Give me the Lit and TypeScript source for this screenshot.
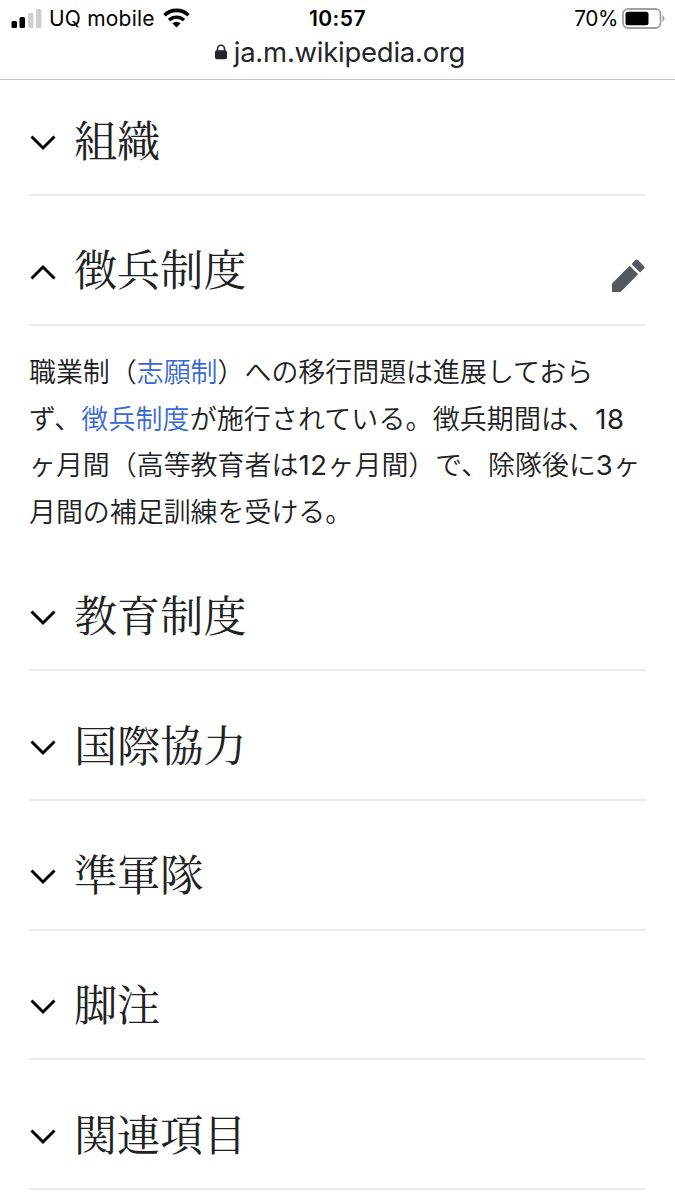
import { LitElement, html, css, svg, nothing } from "lit";
import { customElement, property } from "lit/decorators.js";

@customElement("status-bar")
class StatusBar extends LitElement {
  static styles = css`
    :host { display: block; font-family: Inter, sans-serif; color: #000; }
    .row { display: grid; grid-template-columns: 1fr auto 1fr; height: 36px; align-items: center; padding: 1px 11px 0 11px; box-sizing: border-box; }
    .left, .right { display: flex; align-items: center; }
    .right { justify-content: flex-end; }
    .signal { width: 31px; height: 19px; margin: -1px 7px 0 0; }
    .carrier { font-size: 21px; letter-spacing: 0.2px; }
    .wifi { width: 27px; height: 20px; margin: -1px 0 0 8px; }
    .time { font-size: 21px; font-weight: 600; letter-spacing: 0.5px; }
    .percent { font-size: 20.8px; letter-spacing: -0.4px; }
    .battery { width: 43px; height: 21px; margin: -1px -1px 0 4px; }
    .address { display: flex; justify-content: center; align-items: center; height: 44px; padding: 0 0 12px 5px; box-sizing: border-box; border-bottom: 1px solid #c6c6c8; color: #242529; }
    .lock { width: 12px; height: 16px; margin: 0 7px 0 0; }
    .host { font-size: 27.5px; letter-spacing: -0.25px; line-height: 32px; }
    svg { display: block; flex: none; }
  `;
  render() {
    return html`
      <div class="row">
        <div class="left">
          <svg class="signal" viewBox="0 0 31 19">
            <rect x="0.5" y="12" width="5.5" height="7" rx="1.5" />
            <rect x="8.5" y="8" width="5.5" height="11" rx="1.5" />
            <rect x="17" y="4" width="5.5" height="15" rx="1.5" fill="#cfcfcf" />
            <rect x="25" y="0" width="5.5" height="19" rx="1.5" fill="#cfcfcf" />
          </svg>
          <span class="carrier">UQ mobile</span>
          <svg class="wifi" viewBox="0 0 27 20">
            <path d="M1.5 7.2a17.4 17.4 0 0 1 24 0" fill="none" stroke="#000" stroke-width="3.6" />
            <path d="M6 12a11 11 0 0 1 15 0" fill="none" stroke="#000" stroke-width="3.3" />
            <path d="M9.3 15.3a6.2 6.2 0 0 1 8.4 0L13.5 19.5z" />
          </svg>
        </div>
        <span class="time">10:57</span>
        <div class="right">
          <span class="percent">70%</span>
          <svg class="battery" viewBox="0 0 43 21">
            <rect x="1" y="1" width="37.5" height="19" rx="5" fill="none" stroke="#a0a0a0" stroke-width="1.8" />
            <rect x="3.5" y="3.7" width="23" height="13.6" rx="2.5" />
            <path d="M40.5 7.3c2.6 1 2.6 5.4 0 6.4z" fill="#a0a0a0" />
          </svg>
        </div>
      </div>
      <div class="address">
        <svg class="lock" viewBox="0 0 12 16">
          <rect x="0" y="6.3" width="12" height="9" rx="1.8" fill="#242529" />
          <path d="M2.5 7.5V5a3.5 3.8 0 0 1 7 0v2.5" fill="none" stroke="#242529" stroke-width="1.6" />
        </svg>
        <span class="host">ja.m.wikipedia.org</span>
      </div>
    `;
  }
}

@customElement("wiki-section")
class WikiSection extends LitElement {
  @property() heading = "";
  @property({ type: Boolean }) open = false;
  static styles = css`
    :host { display: block; }
    .head { display: flex; align-items: center; height: 129.65px; padding-top: 15px; box-sizing: border-box; border-bottom: 2px solid #eaecf0; }
    .chevron { width: 28px; height: 18px; margin: 8px 17px 0 0; }
    .chevron.up { margin-top: 11px; }
    h2 { flex: 1; margin: 0; font: 400 43.2px/62px "Noto Serif CJK JP", "Noto Serif JP", "Noto Sans CJK JP", serif; color: #202122; letter-spacing: -0.1px; }
    .pencil { width: 34px; height: 34px; margin: 17px 1px 0 0; }
    svg { display: block; flex: none; }
  `;
  render() {
    const stroke = this.open ? "M2.5 14.5 14 3l11.5 11.5" : "M2.5 3.5 14 15 25.5 3.5";
    return html`
      <div class="head">
        <svg class=${this.open ? "chevron up" : "chevron"} viewBox="0 0 28 18">
          ${svg`<path d=${stroke} fill="none" stroke="#000" stroke-width="3" />`}
        </svg>
        <h2>${this.heading}</h2>
        ${this.open
          ? html`<svg class="pencil" viewBox="0 0 34 34" fill="#54595d">
              <path d="M1 24.5 18.700 6.800 27.200 15.300 9.500 33H1z" />
              <path d="M20.600 4.900 24.400 1.100q1.300-1.100 2.500 0L32.900 7.100q1.100 1.200 0 2.500L29.100 13.400z" />
            </svg>`
          : nothing}
      </div>
      <slot></slot>
    `;
  }
}

@customElement("app-root")
class AppRoot extends LitElement {
  static styles = css`
    :host { display: block; height: 1200px; overflow: hidden; background: #fff; }
    main { margin: -13.6px 29px 0; }
    .text { height: 216px; box-sizing: border-box; margin: 0; padding-top: 22.2px; font: 350 26.95px/46.8px "Noto Sans CJK JP DemiLight", "Noto Sans CJK JP", sans-serif; color: #202122; white-space: nowrap; }
    .wide { letter-spacing: 0.15px; }
    .num { font-family: Inter, sans-serif; font-weight: 400; font-size: 27.5px; letter-spacing: 0.6px; line-height: 1; }
    a { color: #3868d4; text-decoration: none; }
  `;
  render() {
    return html`
      <status-bar></status-bar>
      <main lang="ja">
        <wiki-section heading="組織"></wiki-section>
        <wiki-section heading="徴兵制度" open>
          <p class="text">職業制（<a>志願制</a>）への移行問題は進展しておら<br /><span class="wide">ず、<a>徴兵制度</a>が施行されている。徴兵期間は、</span><span class="num">18</span><br />ヶ月間（高等教育者は<span class="num">12</span>ヶ月間）で、除隊後に<span class="num">3</span>ヶ<br />月間の補足訓練を受ける。</p>
        </wiki-section>
        <wiki-section heading="教育制度"></wiki-section>
        <wiki-section heading="国際協力"></wiki-section>
        <wiki-section heading="準軍隊"></wiki-section>
        <wiki-section heading="脚注"></wiki-section>
        <wiki-section heading="関連項目"></wiki-section>
      </main>
    `;
  }
}
